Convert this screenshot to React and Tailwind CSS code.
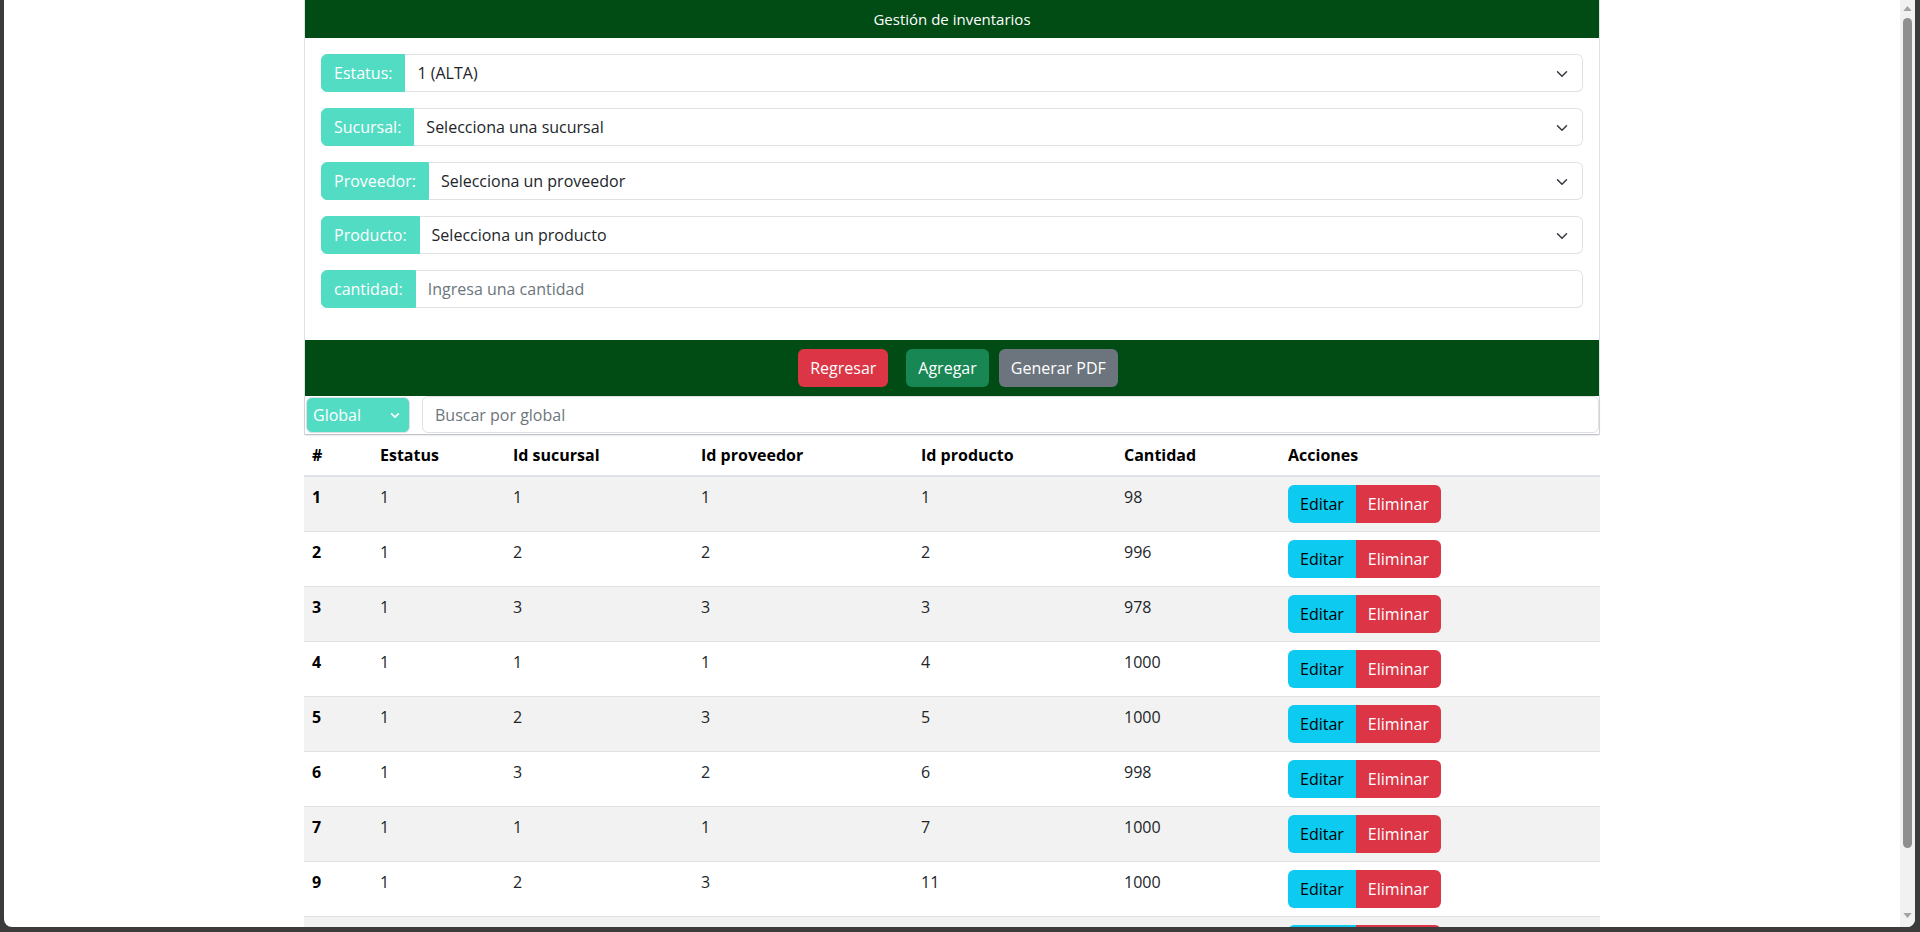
import { useState } from "react"

const rows = [
  { id: 1, estatus: 1, sucursal: 1, proveedor: 1, producto: 1, cantidad: 98 },
  { id: 2, estatus: 1, sucursal: 2, proveedor: 2, producto: 2, cantidad: 996 },
  { id: 3, estatus: 1, sucursal: 3, proveedor: 3, producto: 3, cantidad: 978 },
  { id: 4, estatus: 1, sucursal: 1, proveedor: 1, producto: 4, cantidad: 1000 },
  { id: 5, estatus: 1, sucursal: 2, proveedor: 3, producto: 5, cantidad: 1000 },
  { id: 6, estatus: 1, sucursal: 3, proveedor: 2, producto: 6, cantidad: 998 },
  { id: 7, estatus: 1, sucursal: 1, proveedor: 1, producto: 7, cantidad: 1000 },
  { id: 9, estatus: 1, sucursal: 2, proveedor: 3, producto: 11, cantidad: 1000 },
  { id: 10, estatus: 1, sucursal: 3, proveedor: 2, producto: 12, cantidad: 1000 },
]

function Chevron({ className, width = 2 }) {
  return (
    <svg viewBox="0 0 16 16" className={className} fill="none">
      <path d="m2 5 6 6 6-6" stroke="currentColor" strokeWidth={width} strokeLinecap="round" strokeLinejoin="round" />
    </svg>
  )
}

function SelectGroup({ label, value }) {
  return (
    <div className="flex h-[38px] mb-4">
      <span className="flex items-center px-3 bg-[#52dcc4] border border-[#52dcc4] text-white rounded-l-md">
        {label}
      </span>
      <div className="relative flex-1 flex items-center border border-[#dee2e6] border-l-0 rounded-r-md bg-white">
        <select className="appearance-none w-full h-full pl-3 pr-10 bg-transparent text-[#212529] outline-none">
          <option>{value}</option>
        </select>
        <Chevron className="absolute right-3 top-[13px] w-4 h-3 text-[#343a40] pointer-events-none" />
      </div>
    </div>
  )
}

export default function App() {
  const [cantidad, setCantidad] = useState("")
  const [busqueda, setBusqueda] = useState("")

  return (
    <div className="h-screen w-full bg-[#3b3b3b] pl-[4px] pr-[5px] pb-[5px] font-['Open_Sans',sans-serif] text-base text-[#212529]">
      <div className="flex h-full bg-white rounded-b-lg overflow-hidden">

        {/* page */}
        <div className="flex-1 overflow-hidden">
          <div className="w-[1296px] mx-auto">

            <div className="border border-[#dee2e6] border-t-0">

              <div className="h-[38px] flex items-center justify-center bg-[#014b14] text-white text-[15px]">
                Gestión de inventarios
              </div>

              <div className="px-4 pt-4 pb-8">
                <SelectGroup label="Estatus:" value="1 (ALTA)" />
                <SelectGroup label="Sucursal:" value="Selecciona una sucursal" />
                <SelectGroup label="Proveedor:" value="Selecciona un proveedor" />
                <SelectGroup label="Producto:" value="Selecciona un producto" />

                <div className="flex h-[38px]">
                  <span className="flex items-center px-3 bg-[#52dcc4] border border-[#52dcc4] text-white rounded-l-md">
                    cantidad:
                  </span>
                  <input
                    value={cantidad}
                    onChange={(e) => setCantidad(e.target.value)}
                    placeholder="Ingresa una cantidad"
                    className="flex-1 px-3 border border-[#dee2e6] border-l-0 rounded-r-md outline-none placeholder:text-[#6c757d]"
                  />
                </div>
              </div>

              {/* footer buttons */}
              <div className="h-[56px] flex items-center justify-center pl-[12px] bg-[#014b14]">
                <button className="h-[38px] px-3 mr-[18px] bg-[#dc3545] text-white rounded-md">Regresar</button>
                <button className="h-[38px] px-3 mr-[10px] bg-[#198754] text-white rounded-md">Agregar</button>
                <button className="h-[38px] px-3 bg-[#6c757d] text-white rounded-md">Generar PDF</button>
              </div>

              {/* search */}
              <div className="flex h-[38px] pl-[1px] gap-3 shadow-[0_1px_2px_rgba(0,0,0,0.2)]">
                <div className="relative w-[104px] h-[36px] mt-[1px] bg-[#52dcc4] border border-[#dee2e6] rounded-md">
                  <select className="appearance-none w-full h-full pl-[6px] bg-transparent text-white outline-none">
                    <option>Global</option>
                  </select>
                  <Chevron width={3} className="absolute right-[9px] top-[13px] w-[10px] h-[9px] text-white pointer-events-none" />
                </div>
                <input
                  value={busqueda}
                  onChange={(e) => setBusqueda(e.target.value)}
                  placeholder="Buscar por global"
                  className="flex-1 h-[37px] px-3 border border-[#dee2e6] rounded-md outline-none placeholder:text-[#6c757d]"
                />
              </div>
            </div>

            {/* table */}
            <table className="w-full table-fixed border-collapse text-[#212529]">
              <thead>
                <tr className="h-[41px] border-b-2 border-[#dee2e6] text-left">
                  <th className="w-[68px] px-2 font-bold text-black">#</th>
                  <th className="w-[133px] px-2 font-bold text-black">Estatus</th>
                  <th className="w-[188px] px-2 font-bold text-black">Id sucursal</th>
                  <th className="w-[220px] px-2 font-bold text-black">Id proveedor</th>
                  <th className="w-[203px] px-2 font-bold text-black">Id producto</th>
                  <th className="w-[164px] px-2 font-bold text-black">Cantidad</th>
                  <th className="px-2 font-bold text-black">Acciones</th>
                </tr>
              </thead>
              <tbody>
                {rows.map((r, i) => (
                  <tr key={r.id} className={(i % 2 === 0 ? "bg-[#f2f2f2] " : "bg-white ") + "border-b border-[#dee2e6]"}>
                    <td className="px-2 py-2 align-top font-bold text-black">{r.id}</td>
                    <td className="px-2 py-2 align-top">{r.estatus}</td>
                    <td className="px-2 py-2 align-top">{r.sucursal}</td>
                    <td className="px-2 py-2 align-top">{r.proveedor}</td>
                    <td className="px-2 py-2 align-top">{r.producto}</td>
                    <td className="px-2 py-2 align-top">{r.cantidad}</td>
                    <td className="px-2 py-2 align-top">
                      <div className="flex">
                        <button className="h-[38px] px-3 bg-[#0dcaf0] text-black rounded-l-md">Editar</button>
                        <button className="h-[38px] px-3 bg-[#dc3545] text-white rounded-r-md">Eliminar</button>
                      </div>
                    </td>
                  </tr>
                ))}
              </tbody>
            </table>

          </div>
        </div>

        {/* scrollbar */}
        <div className="w-[15px] flex flex-col items-center bg-[#f1f1f1]">
          <svg viewBox="0 0 10 6" className="w-[9px] h-[5px] mt-[6px] text-[#a3a3a3]">
            <path d="M5 0 10 6H0z" fill="currentColor" />
          </svg>
          <div className="w-[9px] h-[830px] mt-[7px] bg-[#8f8f8f] rounded-full" />
          <div className="flex-1" />
          <svg viewBox="0 0 10 6" className="w-[9px] h-[5px] mb-[9px] text-[#a3a3a3]">
            <path d="M0 0h10L5 6z" fill="currentColor" />
          </svg>
        </div>

      </div>
    </div>
  )
}
